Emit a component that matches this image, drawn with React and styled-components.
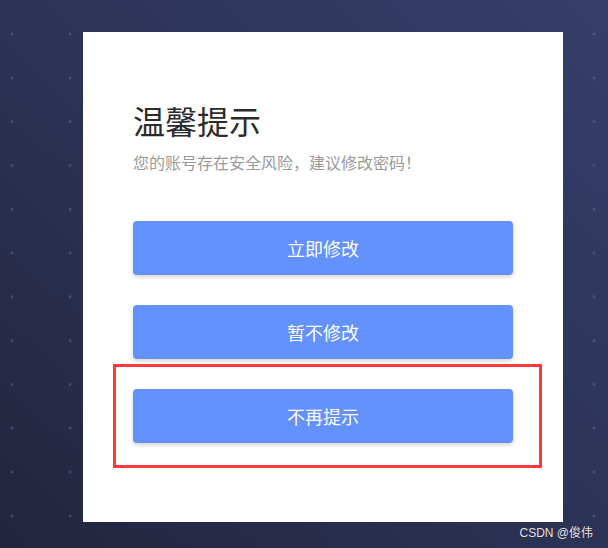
import React from "react";
import styled, { createGlobalStyle } from "styled-components";

const Global = createGlobalStyle`
  html, body { margin: 0; padding: 0; }
  body {
    font-family: "Noto Sans CJK SC", "Noto Sans", "Liberation Sans", sans-serif;
    background: #2c3153;
  }
`;

const Stage = styled.div`
  position: relative;
  width: 608px;
  height: 548px;
  box-sizing: border-box;
  padding: 32px 0 0 83px;
  overflow: hidden;
  background-color: #2c3153;
  background-image:
    radial-gradient(circle at 12px 34px, rgba(120, 130, 170, 0.55) 0, rgba(120, 130, 170, 0.25) 1.2px, transparent 2px),
    linear-gradient(to bottom left, #363e6a 0%, #2d3356 50%, #22253d 100%);
  background-size: 58.2px 43.8px, 100% 100%;
  background-position: 0 0, 0 0;
  background-repeat: repeat, no-repeat;
`;

const Card = styled.div`
  width: 480px;
  height: 490px;
  box-sizing: border-box;
  background: #ffffff;
  padding: 72px 50px 0 50px;
  display: flex;
  flex-direction: column;
`;

const Title = styled.h1`
  margin: 0;
  font-size: 32px;
  line-height: 1;
  font-weight: 400;
  color: #2b2b2b;
`;

const Subtitle = styled.p`
  margin: 18px 0 0;
  font-size: 16px;
  line-height: 1;
  color: #9a9a9a;
`;

const Actions = styled.div`
  margin-top: 51px;
  display: flex;
  flex-direction: column;
  gap: 30px;
`;

const Button = styled.button`
  width: 380px;
  height: 54px;
  border: none;
  border-radius: 4px;
  background: #6391fe;
  color: #ffffff;
  font-family: inherit;
  font-size: 18px;
  box-shadow: 0 2px 4px rgba(0, 0, 0, 0.18);
  cursor: pointer;
`;

const Highlight = styled.div`
  position: relative;
`;

const Annotation = styled.div`
  position: absolute;
  top: -25px;
  left: -20px;
  right: -29px;
  bottom: -25px;
  border: 3px solid #fd3a3a;
  pointer-events: none;
`;

const Watermark = styled.div`
  position: absolute;
  right: 15px;
  bottom: 8px;
  font-size: 12px;
  color: #e4e4e8;
  font-family: "Liberation Sans", "Noto Sans CJK SC", sans-serif;
  text-shadow: 0 0 1px rgba(0, 0, 0, 0.4);
`;

export default function App() {
  return (
    <>
      <Global />
      <Stage>
        <Card>
          <Title>温馨提示</Title>
          <Subtitle>您的账号存在安全风险，建议修改密码！</Subtitle>
          <Actions>
            <Button>立即修改</Button>
            <Button>暂不修改</Button>
            <Highlight>
              <Button>不再提示</Button>
              <Annotation />
            </Highlight>
          </Actions>
        </Card>
        <Watermark>CSDN @俊伟</Watermark>
      </Stage>
    </>
  );
}
